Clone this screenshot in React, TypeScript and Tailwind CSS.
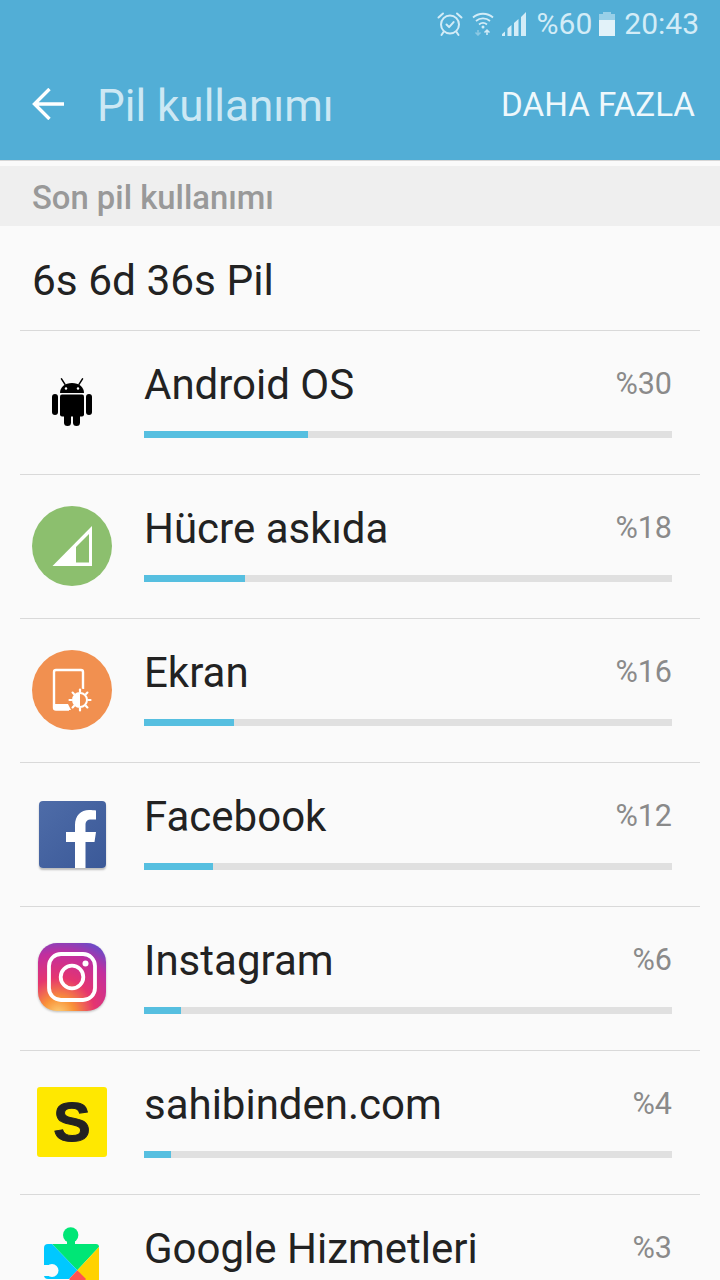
import React from "react";

function Alarm() {
  return (
    <svg width="26" height="26" viewBox="0 0 26 26" fill="none" stroke="#d3ecf7" strokeWidth="2" strokeLinecap="round" strokeLinejoin="round">
      <circle cx="13" cy="13.5" r="9" />
      <path d="M9.500 13.500l2.600 2.600 4.500-5" />
      <path d="M1.500 6.500L6 2.500M24.500 6.500L20 2.500M6.500 21l-2 3M19.500 21l2 3" />
    </svg>
  );
}
function Wifi() {
  return (
    <svg width="22" height="24" viewBox="0 0 22 24" fill="none" stroke="#d3ecf7" strokeWidth="1.800">
      <path d="M1 5.500C6.500 .5 15.500 .5 21 5.500" />
      <path d="M4 9C8 5.500 14 5.500 18 9" />
      <path d="M7 12.500C9.500 10.500 12.500 10.500 15 12.500" />
      <circle cx="11" cy="15" r="1.500" fill="#d3ecf7" stroke="none" />
      <path d="M6 18v5M3.500 20.500L6 23l2.500-2.500" stroke="#8cc9e4" strokeWidth="1.500" />
      <path d="M15 23v-5M12.500 20.500L15 18l2.500 2.500" strokeWidth="1.500" />
    </svg>
  );
}
function Signal() {
  return (
    <svg width="25" height="24" viewBox="0 0 25 24" fill="#d3ecf7">
      <path d="M0 24v-2l3-2.500V24zM5.500 24v-7.500l4-3.500v11zM12 24V11l4.500-4v17zM19 24V5l5-5v24z" />
    </svg>
  );
}
function Battery() {
  return (
    <div className="flex h-[24px] w-[16px] flex-col items-center">
      <div className="h-[2px] w-[8px] bg-[#98d0e8]" />
      <div className="h-[6px] w-[16px] bg-[#98d0e8]" />
      <div className="h-[16px] w-[16px] bg-[#e2f2f9]" />
    </div>
  );
}

function AndroidIcon() {
  return (
    <svg width="40" height="48" viewBox="0 0 40 48" fill="#000">
      <path d="M9.500 .8l3.500 5.500M30.500 .8L27 6.300" stroke="#000" strokeWidth="1.500" strokeLinecap="round" />
      <path d="M8 15C8 9 13 5 20 5s12 4 12 10z" />
      <rect x="8" y="16.500" width="24" height="22" rx="2" />
      <rect x="0" y="16" width="6" height="21" rx="3" />
      <rect x="34" y="16" width="6" height="21" rx="3" />
      <rect x="12" y="30" width="7" height="18" rx="3.500" />
      <rect x="21" y="30" width="7" height="18" rx="3.500" />
      <circle cx="14" cy="10.500" r="1.200" fill="#fff" />
      <circle cx="26" cy="10.500" r="1.200" fill="#fff" />
    </svg>
  );
}
function CellIcon() {
  return (
    <svg width="80" height="80" viewBox="0 0 80 80">
      <circle cx="40" cy="40" r="40" fill="#8cbf6e" />
      <path d="M20.500 60L60 20v40z" fill="#fff" />
      <path d="M44 41l13-13v28.500H44z" fill="#8cbf6e" />
    </svg>
  );
}
function ScreenIcon() {
  const rays = [0, 45, 90, 135, 180, 225, 270, 315];
  return (
    <svg width="80" height="80" viewBox="0 0 80 80">
      <circle cx="40" cy="40" r="40" fill="#f19050" />
      <path d="M37 59.500H24a2 2 0 0 1-2-2V22a2 2 0 0 1 2-2h25a2 2 0 0 1 2 2v17" fill="none" stroke="#fff" strokeWidth="2.400" />
      <path d="M22 54h14l3 6H24a2 2 0 0 1-2-2z" fill="#fff" />
      <circle cx="48" cy="50" r="11.500" fill="#f19050" />
      <g stroke="#fff" strokeWidth="2.200" strokeLinecap="round">
        {rays.map((r) => (
          <path key={r} d="M48 41.500V39.500" transform={`rotate(${r} 48 50)`} />
        ))}
      </g>
      <circle cx="48" cy="50" r="7" fill="none" stroke="#fff" strokeWidth="2" />
      <path d="M48 43a7 7 0 0 0 0 14z" fill="#fff" />
    </svg>
  );
}
function FacebookIcon() {
  return (
    <div className="h-[67px] w-[67px] overflow-hidden rounded-[4px] bg-gradient-to-br from-[#4e6ca8] to-[#3b5998] shadow-[0_2px_2px_rgba(0,0,0,0.25)]">
      <svg width="67" height="67" viewBox="0 0 67 67">
        <path d="M36 67V41H27V31h9v-7C36 14.500 42 9 50 9c3 0 5 .2 7 .5v9h-4.500C48 18.500 46.500 20.500 46.500 24v7H57l-1.500 10h-9v26z" fill="#fff" />
      </svg>
    </div>
  );
}
function InstagramIcon() {
  return (
    <svg width="68" height="68" viewBox="0 0 68 68" className="mb-[2px] drop-shadow-[0_1px_1px_rgba(0,0,0,0.25)]">
      <defs>
        <radialGradient id="ig" cx="0.3" cy="1.05" r="1.2">
          <stop offset="0" stopColor="#fdd27a" />
          <stop offset="0.2" stopColor="#f99238" />
          <stop offset="0.45" stopColor="#e5356f" />
          <stop offset="0.75" stopColor="#c22e9e" />
          <stop offset="1" stopColor="#5b50cf" />
        </radialGradient>
      </defs>
      <rect x="0" y="0" width="68" height="68" rx="19" fill="url(#ig)" />
      <rect x="11" y="11" width="46" height="46" rx="12" fill="none" stroke="#fff" strokeWidth="3.800" />
      <circle cx="34" cy="34" r="11.300" fill="none" stroke="#fff" strokeWidth="3.800" />
      <circle cx="47.500" cy="20.500" r="3" fill="#fff" />
    </svg>
  );
}
function SahibindenIcon() {
  return (
    <div className="flex h-[70px] w-[70px] items-center justify-center rounded-[3px] bg-[#ffe800] font-['Liberation_Sans',sans-serif] text-[56px] font-bold leading-none text-[#222] [-webkit-text-stroke:1px_#222]">
      S
    </div>
  );
}
function PlayIcon() {
  return (
    <svg width="56" height="78" viewBox="0 0 56 78" className="shrink-0">
      <path d="M4 17h48a3 3 0 0 1 3 3L33.300 43.300 8 17z" fill="#00e676" />
      <circle cx="26.700" cy="8" r="7.700" fill="#00e676" />
      <path d="M23 12h8v6h-8z" fill="#00e676" />
      <path d="M8 17l25.300 26.300L25 52 H4a4 4 0 0 1-4-4V21a4 4 0 0 1 4-4z" fill="#00c8ff" />
      <path d="M55 20v34H41L33.300 43.300z" fill="#ffd200" />
      <path d="M33.300 43.300L42 52l-8.700 9L25 52z" fill="#ff5252" />
      <circle cx="8" cy="43.500" r="6.500" fill="#fafafa" />
      <path d="M0 38h6v11H0z" fill="#fafafa" />
    </svg>
  );
}

const rows = [
  { name: "Android OS", pct: "%30", bar: 164, icon: <AndroidIcon /> },
  { name: "Hücre askıda", pct: "%18", bar: 101, icon: <CellIcon /> },
  { name: "Ekran", pct: "%16", bar: 90, icon: <ScreenIcon /> },
  { name: "Facebook", pct: "%12", bar: 69, icon: <FacebookIcon /> },
  { name: "Instagram", pct: "%6", bar: 37, icon: <InstagramIcon /> },
  { name: "sahibinden.com", pct: "%4", bar: 27, icon: <SahibindenIcon /> },
  { name: "Google Hizmetleri", pct: "%3", bar: 20, icon: <PlayIcon /> },
];

export default function App() {
  return (
    <div className="h-[1280px] w-[720px] overflow-hidden bg-[#fafafa] font-['Roboto',sans-serif]">
      <div className="h-[160px] bg-[#52aed6]">
        <div className="flex h-[48px] items-center justify-end pr-[21px] text-[30px] leading-none text-[#d3ecf7]">
          <span className="mr-[9px]"><Alarm /></span>
          <span className="mr-[8px]"><Wifi /></span>
          <span className="mr-[10px]"><Signal /></span>
          <span>%60</span>
          <span className="ml-[7px] mr-[9px]"><Battery /></span>
          <span>20:43</span>
        </div>
        <div className="flex h-[112px] items-center">
          <svg width="33" height="32" viewBox="0 0 33 32" fill="none" stroke="#fff" strokeWidth="3.400" className="ml-[32px]">
            <path d="M32 16H3M17.500 1L2.500 16 17.500 31" />
          </svg>
          <span className="ml-[32px] mt-[4px] text-[44px] leading-none text-[#cce8f4]">Pil kullanımı</span>
          <span className="ml-auto mr-[25px] mt-[2px] text-[33.2px] leading-none text-[#eef8fc]">DAHA FAZLA</span>
        </div>
      </div>
      <div className="border-t border-[#d6d6d6] pt-[5px]">
        <div className="flex h-[60px] items-center bg-[#efefef] pl-[32px] pt-[5px] text-[32.8px] font-medium text-[#999]">Son pil kullanımı</div>
      </div>
      <div className="mx-[20px] flex h-[105px] items-center border-b border-[#d9d9d9] pl-[12px] pt-[6px] text-[42.4px] text-[#222]">6s 6d 36s Pil</div>
      {rows.map((r) => (
        <div key={r.name} className="mx-[20px] flex h-[144px] border-b border-[#d9d9d9] pl-[12px] pr-[28px]">
          <div className="mt-[31px] flex h-[80px] w-[80px] shrink-0 items-center justify-center">
            {r.icon}
          </div>
          <div className="ml-[32px] flex-1">
            <div className="flex h-[100px] justify-between pt-[29px]">
              <span className="mt-[1px] text-[42px] leading-[48px] text-[#222]">{r.name}</span>
              <span className="text-[30.5px] leading-[48px] text-[#8a8a8a]">{r.pct}</span>
            </div>
            <div className="h-[7px] w-full bg-[#e0e0e0]">
              <div className="h-[7px] bg-[#56bfe0]" style={{ width: r.bar }} />
            </div>
          </div>
        </div>
      ))}
    </div>
  );
}
